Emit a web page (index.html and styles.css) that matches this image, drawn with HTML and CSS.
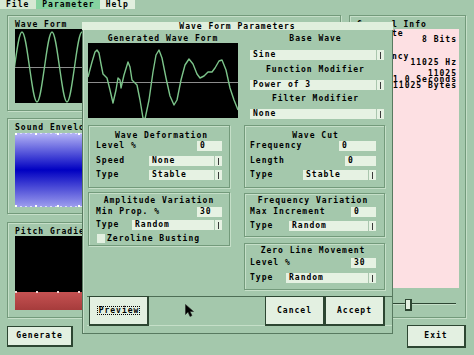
FILE: index.html
```html
<!DOCTYPE html>
<html>
<head>
<meta charset="utf-8">
<title>Wave Form Parameters</title>
<link rel="stylesheet" href="styles.css">
</head>
<body>
<div class="menubar">
  <span class="menu-item file">File</span>
  <span class="menu-item active">Parameter</span>
  <span class="menu-item help">Help</span>
</div>

<div class="window">
  <div class="left-col">
    <section class="panel">
      <div class="panel-label">Wave Form</div>
      <svg class="scope" viewBox="0 0 318 74" width="318" height="74">
        <line x1="0" y1="38.5" x2="318" y2="38.5" stroke="#8c8c8c" stroke-width="1"/>
        <path fill="none" stroke="#7cc48a" stroke-width="1.4" d="M-0.5 38 c2.446 -17.93 4.786 -35 7.5 -35 s5.054 17.93 7.5 35 s4.786 35 7.5 35 s5.054 -17.93 7.5 -35 s4.786 -35 7.5 -35 s5.054 17.93 7.5 35 s4.786 35 7.5 35 s5.054 -17.93 7.5 -35 s4.786 -35 7.5 -35 s5.054 17.93 7.5 35 s4.786 35 7.5 35 s5.054 -17.93 7.5 -35 s4.786 -35 7.5 -35 s5.054 17.93 7.5 35 s4.786 35 7.5 35 s5.054 -17.93 7.5 -35 s4.786 -35 7.5 -35 s5.054 17.93 7.5 35 s4.786 35 7.5 35 s5.054 -17.93 7.5 -35 s4.786 -35 7.5 -35 s5.054 17.93 7.5 35 s4.786 35 7.5 35 s5.054 -17.93 7.5 -35 s4.786 -35 7.5 -35"/>
      </svg>
    </section>
    <section class="panel">
      <div class="panel-label">Sound Envelope</div>
      <svg class="envelope" viewBox="0 0 318 74" width="318" height="74">
        <defs>
          <linearGradient id="env" x1="0" y1="0" x2="0" y2="1">
            <stop offset="0" stop-color="#b6b6f6"/>
            <stop offset="0.5" stop-color="#0000c2"/>
            <stop offset="1" stop-color="#9e9eee"/>
          </linearGradient>
        </defs>
        <rect x="0" y="0" width="318" height="74" fill="url(#env)"/>
        <line x1="0" y1="0.5" x2="318" y2="0.5" stroke="#dcdcff" stroke-width="1" stroke-dasharray="2 3"/>
        <line x1="0" y1="73.5" x2="318" y2="73.5" stroke="#dcdcff" stroke-width="1" stroke-dasharray="2 3"/>
        <g fill="#ffffff">
          <rect x="0" y="0" width="2" height="2"/><rect x="20" y="0" width="2" height="2"/><rect x="42" y="0" width="2" height="2"/><rect x="63" y="0" width="2" height="2"/><rect x="84" y="0" width="2" height="2"/>
          <rect x="0" y="72" width="2" height="2"/><rect x="20" y="72" width="2" height="2"/><rect x="42" y="72" width="2" height="2"/><rect x="63" y="72" width="2" height="2"/><rect x="84" y="72" width="2" height="2"/>
        </g>
      </svg>
    </section>
    <section class="panel pitch">
      <div class="panel-label">Pitch Gradient</div>
      <svg class="pitch-area" viewBox="0 0 318 74" width="318" height="74">
        <defs>
          <linearGradient id="red" x1="0" y1="0" x2="0" y2="1">
            <stop offset="0" stop-color="#c65252"/>
            <stop offset="1" stop-color="#a63c3c"/>
          </linearGradient>
        </defs>
        <rect x="0" y="0" width="318" height="56" fill="#000"/>
        <rect x="0" y="56" width="318" height="18" fill="url(#red)"/>
        <g fill="#f0d0d0">
          <rect x="0" y="55" width="2" height="2"/><rect x="21" y="55" width="2" height="2"/><rect x="42" y="55" width="2" height="2"/><rect x="63" y="55" width="2" height="2"/><rect x="84" y="55" width="2" height="2"/>
        </g>
      </svg>
    </section>
  </div>

  <section class="panel info-panel">
    <div class="info-title">General Info</div>
    <div class="info-box">
      <div class="info-line"><span>Bit Rate</span></div>
      <div class="info-line"><span class="val">8 Bits</span></div>
      <div class="info-line gap-a"><span>Frequency</span></div>
      <div class="info-line"><span class="val">11025 Hz</span></div>
      <div class="info-line gap-b"><span class="val">11025</span></div>
      <div class="info-line"><span class="val">1.0 Seconds</span></div>
      <div class="info-line"><span class="val">11025 Bytes</span></div>
    </div>
    <div class="slider"><div class="thumb"></div></div>
  </section>
</div>

<div class="bottom-bar">
  <button class="btn generate">Generate</button>
  <button class="btn exit">Exit</button>
</div>

<div class="dialog">
  <div class="dialog-title">Wave Form Parameters</div>
  <div class="dialog-body">
    <div class="top-section">
      <div class="gen">
        <div class="center-label">Generated Wave Form</div>
        <svg class="gen-wave" viewBox="0 0 150 75" width="150" height="75">
          <line x1="0" y1="39.5" x2="150" y2="39.5" stroke="#8c8c8c" stroke-width="1"/>
          <polyline fill="none" stroke="#7cc48a" stroke-width="1.4" stroke-linejoin="round" points="0,34 4,19 7,9 9,7 11,10 13,21 15,31 19,35 22,47 25,60 28,47 30,35 32,37 33,45 36,32 40,19 42,24 44,37 49,42 52,57 55,75 57,76 61,57 65,29 68,12 71,7 74,15 78,35 82,53 86,62 89,57 93,37 97,22 101,16 105,21 109,31 112,35 116,33 120,29 124,29 127,25 131,18 134,17 138,27 142,45 146,57 150,67"/>
        </svg>
      </div>
      <div class="mods">
        <div class="center-label">Base Wave</div>
        <div class="select mt7"><span class="sel-text">Sine</span><span class="sel-btn"></span></div>
        <div class="center-label mt6">Function Modifier</div>
        <div class="select mt6"><span class="sel-text">Power of 3</span><span class="sel-btn"></span></div>
        <div class="center-label mt5">Filter Modifier</div>
        <div class="select mt6"><span class="sel-text">None</span><span class="sel-btn"></span></div>
      </div>
    </div>

    <div class="mid">
      <div class="stack">
        <div class="group g-deform">
          <div class="group-title shift">Wave Deformation</div>
          <div class="row mt1"><span>Level %</span><span class="input w25">0</span></div>
          <div class="row mt5"><span>Speed</span><span class="select w73"><span class="sel-text">None</span><span class="sel-btn"></span></span></div>
          <div class="row mt4"><span>Type</span><span class="select w73"><span class="sel-text">Stable</span><span class="sel-btn"></span></span></div>
        </div>
        <div class="group g-amp">
          <div class="group-title">Amplitude Variation</div>
          <div class="row mt2"><span>Min Prop. %</span><span class="input w25">30</span></div>
          <div class="row mt3"><span>Type</span><span class="select w90"><span class="sel-text">Random</span><span class="sel-btn"></span></span></div>
          <div class="check-row"><span class="checkbox"></span><span>Zeroline Busting</span></div>
        </div>
      </div>
      <div class="stack right">
        <div class="group g-cut">
          <div class="group-title shift">Wave Cut</div>
          <div class="row mt1"><span>Frequency</span><span class="input w37">0</span></div>
          <div class="row mt5"><span>Length</span><span class="input w31">0</span></div>
          <div class="row mt4"><span>Type</span><span class="select w73"><span class="sel-text">Stable</span><span class="sel-btn"></span></span></div>
        </div>
        <div class="group g-freq">
          <div class="group-title">Frequency Variation</div>
          <div class="row mt2"><span>Max Increment</span><span class="input w25">0</span></div>
          <div class="row mt4"><span>Type</span><span class="select w87"><span class="sel-text">Random</span><span class="sel-btn"></span></span></div>
        </div>
        <div class="group g-zero">
          <div class="group-title">Zero Line Movement</div>
          <div class="row mt3"><span>Level %</span><span class="input w25">30</span></div>
          <div class="row mt5"><span>Type</span><span class="select w90"><span class="sel-text">Random</span><span class="sel-btn"></span></span></div>
        </div>
      </div>
    </div>

    <div class="btn-row">
      <button class="btn dbtn"><span class="focus">Preview</span></button>
      <span class="spacer"></span>
      <button class="btn dbtn">Cancel</button>
      <button class="btn dbtn">Accept</button>
    </div>
  </div>
</div>

<svg class="cursor" viewBox="0 0 9 13" width="9" height="13">
  <polygon points="0.5,0.5 0.5,10.5 3,8 5,12.5 7,11.5 5,7.5 8.5,7.5" fill="#000" stroke="#2a2a2a" stroke-width="0.6"/>
</svg>
</body>
</html>
```

FILE: styles.css
```css
* { box-sizing: border-box; margin: 0; padding: 0; }

html, body { width: 474px; height: 355px; }

body {
  position: relative;
  overflow: hidden;
  background: #a4c8ac;
  font-family: "DejaVu Sans Mono", "Liberation Mono", monospace;
  font-weight: bold;
  font-size: 8px;
  letter-spacing: 1px;
  line-height: 8px;
  color: #000;
}

/* menu bar */
.menubar { display: flex; height: 9px; }
.menu-item { height: 9px; line-height: 9px; padding: 0 6px; background: #d6e8d3; white-space: nowrap; }
.menu-item.file { padding: 0 7px 0 6px; }
.menu-item.active { background: #86d3a0; padding: 0 5px 0 6px; }
.menu-item.help { background: #e2efdf; }

/* main window */
.window {
  display: grid;
  grid-template-columns: 334px 117px;
  column-gap: 8px;
  padding: 6px 0 0 7px;
}
.left-col { display: flex; flex-direction: column; }

.panel {
  height: 96px;
  border: 1px solid #739a7b;
  box-shadow: inset 1px 1px 0 #c5dfc8, 1px 1px 0 #c5dfc8;
  padding: 5px 7px 0;
}
.panel + .panel { margin-top: 7px; }
.panel.pitch { margin-top: 8px; }
.panel-label { height: 8px; white-space: nowrap; }

.scope, .pitch-area { display: block; width: 318px; height: 74px; background: #000; }
.envelope { display: block; width: 318px; height: 74px; margin-top: 1px; }

.info-panel { height: 303px; padding: 5px 6px 0; }
.info-title { height: 8px; padding-left: 1px; white-space: nowrap; }
.info-box {
  height: 259px;
  background: #fde0e3;
  padding: 2px 2px 0 1px;
}
.info-line { height: 6px; line-height: 6px; display: flex; white-space: nowrap; }
.info-line .val { margin-left: auto; }
.gap-a { margin-top: 11px; }
.gap-b { margin-top: 5px; }

.slider {
  margin-top: 11px;
  height: 12px;
  padding-left: 49px;
  background:
    linear-gradient(#2d4632, #2d4632) 0 4px / 100px 1px no-repeat,
    linear-gradient(#c5dfc8, #c5dfc8) 0 5px / 100px 1px no-repeat;
}
.thumb {
  width: 7px; height: 12px;
  background: #e3f0e1;
  border: 1px solid #2d4632;
  border-right-width: 2px;
  border-bottom-width: 2px;
}

/* buttons */
.btn {
  appearance: none;
  font: inherit;
  letter-spacing: inherit;
  color: #000;
  background: #e3f0e1;
  border: 1px solid #2d4632;
  border-right-width: 2px;
  border-bottom-width: 2px;
  display: flex;
  align-items: center;
  justify-content: center;
  padding: 0;
  white-space: nowrap;
}

.bottom-bar {
  display: flex;
  justify-content: space-between;
  align-items: flex-start;
  padding: 0 8px 0 7px;
  margin-top: 7px;
}
.generate { width: 66px; height: 21px; margin-top: 1px; }
.exit { width: 59px; height: 23px; }

/* dialog */
.dialog {
  position: absolute;
  left: 82px;
  top: 22px;
  width: 311px;
  height: 312px;
  background: #a4c8ac;
  border: 1px solid #587a60;
  border-top: 0;
  box-shadow: inset 1px 0 0 #c5dfc8;
}
.dialog-title {
  height: 8px;
  line-height: 9px;
  text-align: center;
  background: #e0efdd;
  margin: 0 -1px;
  white-space: nowrap;
}
.dialog-body { padding: 5px 7px 0 5px; }

.top-section {
  display: grid;
  grid-template-columns: 150px 1fr;
  column-gap: 8px;
}
.center-label { height: 8px; text-align: center; white-space: nowrap; }
.gen-wave { display: block; width: 150px; height: 75px; background: #000; }
.mods .select { margin-left: 4px; margin-right: 1px; }

.mt1 { margin-top: 1px; }
.mt2 { margin-top: 2px; }
.mt3 { margin-top: 3px; }
.mt4 { margin-top: 4px; }
.mt5 { margin-top: 5px; }
.mt6 { margin-top: 6px; }
.mt7 { margin-top: 7px; }

.input, .select {
  height: 10px;
  line-height: 10px;
  background: #e6f2e3;
  white-space: nowrap;
}
.input { padding-left: 3px; }
.select { display: flex; }
.sel-text { flex: 1; padding-left: 3px; overflow: hidden; }
.sel-btn {
  width: 8px;
  border-left: 1px solid #aac6ae;
  background: linear-gradient(#3a3a3a, #3a3a3a) center / 1px 7px no-repeat;
}

.w25 { width: 25px; }
.w31 { width: 31px; }
.w37 { width: 37px; }
.w73 { width: 73px; }
.w87 { width: 87px; }
.w90 { width: 90px; }

.mid {
  display: grid;
  grid-template-columns: 142px 141px;
  column-gap: 14px;
  margin-top: 6px;
  align-items: start;
}
.stack { display: flex; flex-direction: column; }
.group {
  border: 1px solid #739a7b;
  box-shadow: inset 1px 1px 0 #c5dfc8, 1px 1px 0 #c5dfc8;
  padding: 0 7px;
}
.stack.right .group { padding: 0 8px 0 5px; }
.group-title { height: 8px; text-align: center; white-space: nowrap; }
.group-title.shift { padding-left: 5px; }
.row {
  display: flex;
  justify-content: space-between;
  align-items: center;
  height: 10px;
  line-height: 10px;
  white-space: nowrap;
}

.g-deform, .g-cut { height: 63px; padding-top: 6px; }
.g-amp { height: 54px; margin-top: 4px; padding-top: 4px; }
.stack.right .g-freq { height: 44px; margin-top: 5px; padding-top: 3px; }
.stack.right .g-zero { height: 47px; margin-top: 6px; padding-top: 3px; }
.stack.right .g-cut { padding-top: 6px; }

.check-row { display: flex; align-items: center; height: 9px; margin-top: 4px; padding-left: 1px; white-space: nowrap; }
.checkbox { width: 8px; height: 9px; background: #e3f0e1; margin-right: 2px; }

.btn-row {
  display: flex;
  height: 30px;
  margin: 6px -7px 0 -1px;
  padding: 0 7px 0 2px;
  box-shadow: inset 0 1px 0 #4d6e55, inset 0 -1px 0 #c5dfc8;
}
.spacer { flex: 1; }
.dbtn { width: 60px; height: 30px; }
.focus { outline: 1px dotted #000; padding: 0 0 0 1px; line-height: 7px; height: 7px; }

.cursor { position: absolute; left: 185px; top: 304px; }
```
